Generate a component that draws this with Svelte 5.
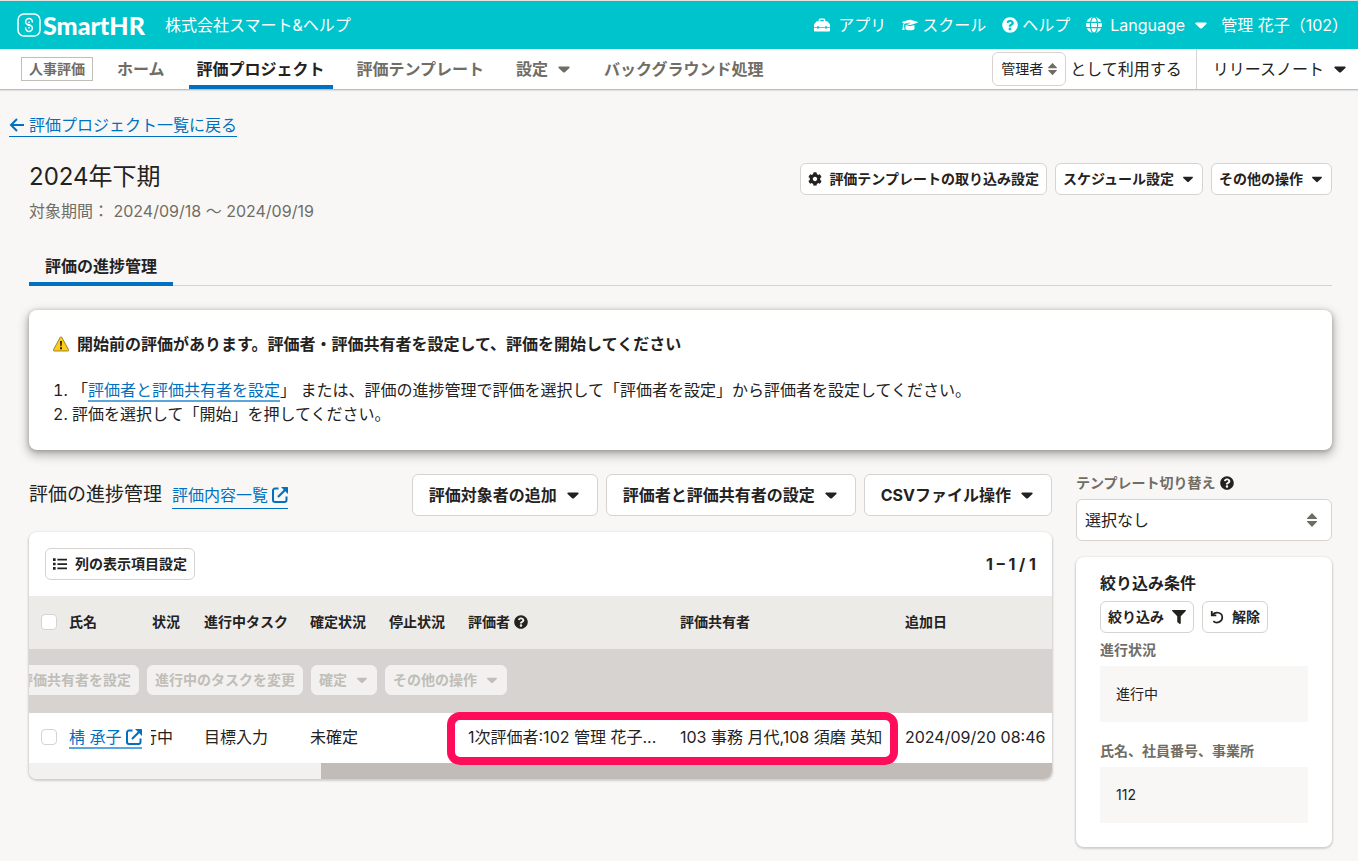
<script lang="ts">
	let role: string = $state('admin');
	let template: string = $state('');
	let allChecked: boolean = $state(false);

	const navLinks: string[] = ['ホーム', '評価プロジェクト', '評価テンプレート'];
	const currentNav = '評価プロジェクト';

	const listActions: string[] = ['評価対象者の追加', '評価者と評価共有者の設定', 'CSVファイル操作'];

	const batchActions = [
		{ label: '評価共有者を設定', menu: false },
		{ label: '進行中のタスクを変更', menu: false },
		{ label: '確定', menu: true },
		{ label: 'その他の操作', menu: true }
	];

	let rows = $state([
		{
			name: '棈 承子',
			status: '進行中',
			task: '目標入力',
			fixed: '未確定',
			stopped: '',
			evaluator: '1次評価者:102 管理 花子...',
			shared: '103 事務 月代,108 須磨 英知',
			added: '2024/09/20 08:46',
			checked: false
		}
	]);

	const conditions = [
		{ label: '進行状況', value: '進行中' },
		{ label: '氏名、社員番号、事業所', value: '112' }
	];

	function toggleAll() {
		rows.forEach((row) => (row.checked = allChecked));
	}
</script>

{#snippet caret()}
	<svg class="caret" viewBox="0 0 16 16" aria-hidden="true">
		<path d="M3.2 5.5h9.6c.8 0 1.1.8.6 1.4l-4.5 4.3c-.5.5-1.3.5-1.8 0L2.6 6.9c-.5-.6-.2-1.4.6-1.4z" />
	</svg>
{/snippet}

{#snippet sorter()}
	<svg class="sorter" viewBox="0 0 12 16" aria-hidden="true">
		<path d="M6 1l5 5.2v.8H1v-.8zM6 15l5-5.2V9H1v.8z" />
	</svg>
{/snippet}

{#snippet help()}
	<svg class="help" viewBox="0 0 512 512" aria-hidden="true">
		<path
			d="M504 256c0 136.997-111.043 248-248 248S8 392.997 8 256C8 119.083 119.043 8 256 8s248 111.083 248 248zM262.655 90c-54.497 0-89.255 22.957-116.549 63.758-3.536 5.286-2.353 12.415 2.715 16.258l34.699 26.31c5.205 3.947 12.621 3.008 16.665-2.122 17.864-22.658 30.113-35.797 57.303-35.797 20.429 0 45.698 13.148 45.698 32.958 0 14.976-12.363 22.667-32.534 33.976C247.128 238.528 216 254.941 216 296v4c0 6.627 5.373 12 12 12h56c6.627 0 12-5.373 12-12v-1.333c0-28.462 83.186-29.647 83.186-106.667 0-58.002-60.165-102-116.531-102zM256 338c-25.365 0-46 20.635-46 46 0 25.364 20.635 46 46 46s46-20.636 46-46c0-25.365-20.635-46-46-46z"
		/>
	</svg>
{/snippet}

{#snippet external()}
	<svg class="external" viewBox="0 0 16 16" aria-hidden="true">
		<path
			d="M6.5 1.5H3a2 2 0 0 0-2 2V13a2 2 0 0 0 2 2h9.5a2 2 0 0 0 2-2V9.5"
			fill="none"
			stroke="currentColor"
			stroke-width="2"
		/>
		<path d="M6 10L13 3" stroke="currentColor" stroke-width="2.2" />
		<path d="M9 0h6.500q.5 0 .5.500V7z" />
	</svg>
{/snippet}

<header>
	<a class="logo" href="#home">
		<svg viewBox="0 0 24 24" aria-hidden="true">
			<rect x="1" y="1" width="22" height="22" rx="6" />
			<path
				d="M15.400 9.600V9a3.400 3.400 0 0 0-6.800 0c0 1.700 1.200 2.400 2.600 3l1.600.8M8.600 14.400v.6a3.400 3.400 0 0 0 6.800 0c0-1.700-1.200-2.400-2.600-3l-1.600-.8M12 8.600v1.400M12 15.400v-1.400"
			/>
		</svg>
		<span>SmartHR</span>
	</a>
	<span class="company">株式会社スマート&ヘルプ</span>
	<div class="account">
		<a class="apps" href="#apps">
			<svg viewBox="0 0 17 16" aria-hidden="true">
				<path
					fill-rule="evenodd"
					d="M5 4V2.500C5 1.700 5.700 1 6.500 1h4c.8 0 1.500.7 1.500 1.500V4h1.300c.4 0 .8.2 1 .4l2.200 2.300c.3.3.5.7.5 1.100V10h-3.500V9H12v1H5V9H3.500v1H0V7.800c0-.4.2-.8.5-1.100l2.200-2.300c.2-.2.6-.4 1-.4zm1.600 0h3.800V2.600H6.600zM0 11h3.500v1H5v-1h7v1h1.500v-1H17v2.800c0 .7-.5 1.200-1.200 1.200H1.200C.5 15 0 14.500 0 13.800z"
				/>
			</svg>
			アプリ
		</a>
		<a href="#school">
			<svg viewBox="0 0 18 16" aria-hidden="true">
				<path
					d="M9.600 2.100l7.800 2.300c.6.200.6.900 0 1.100L9.700 7.900c-.5.100-.9.100-1.400 0L4.700 6.800l4.400-.8-.2-.8-5.500 1c-.7.300-1.100.9-1.200 1.700.5.300.5 1 .1 1.400L3 13.500H.3l.8-4.200c-.4-.4-.4-1 .1-1.400 0-.9.3-1.500.8-2L.6 5.500C0 5.300 0 4.600.6 4.400l7.700-2.300c.4-.1.900-.1 1.300 0z"
				/>
				<path d="M4.200 8l3.900 1.200c.6.200 1.200.2 1.800 0L13.800 8l.4 3.800c0 2.800-10.400 2.800-10.400 0z" />
			</svg>
			スクール
		</a>
		<a href="#help">{@render help()}ヘルプ</a>
		<button class="language">
			<svg viewBox="0 0 16 16" aria-hidden="true">
				<circle cx="8" cy="8" r="8" />
				<g class="meridians">
					<ellipse cx="8" cy="8" rx="3.600" ry="8" />
					<path d="M0 5.300h16M0 10.700h16" />
				</g>
			</svg>
			Language
			{@render caret()}
		</button>
		<button class="user">管理 花子（102）</button>
	</div>
</header>

<nav>
	<span class="app-name">人事評価</span>
	{#each navLinks as link}
		<a class="nav-link" class:current={link === currentNav} href="#nav">{link}</a>
	{/each}
	<button class="nav-link">設定{@render caret()}</button>
	<a class="nav-link" href="#nav">バックグラウンド処理</a>
	<div class="nav-right">
		<span class="select small">
			<select id="role" bind:value={role}>
				<option value="admin">管理者</option>
			</select>
			{@render sorter()}
		</span>
		<label for="role">として利用する</label>
		<button class="release">リリースノート{@render caret()}</button>
	</div>
</nav>

<main>
	<a class="back" href="#projects">
		<svg viewBox="0 0 16 16" aria-hidden="true">
			<path d="M15 8H2M8 2L2 8l6 6" fill="none" stroke="currentColor" stroke-width="2" />
		</svg>
		評価プロジェクト一覧に戻る
	</a>

	<div class="content">
		<div class="page-head">
			<div>
				<h1>2024年下期</h1>
				<p class="period">対象期間： 2024/09/18 〜 2024/09/19</p>
			</div>
			<div class="actions">
				<button class="btn">
					<svg viewBox="0 0 512 512" aria-hidden="true">
						<path
							d="M487.4 315.7l-42.6-24.6c4.3-23.2 4.3-47 0-70.2l42.6-24.6c4.9-2.8 7.1-8.6 5.5-14-11.1-35.6-30-67.8-54.7-94.6-3.8-4.1-10-5.1-14.8-2.3L380.8 110c-17.9-15.4-38.5-27.3-60.8-35.1V25.8c0-5.6-3.9-10.5-9.4-11.7-36.7-8.2-74.3-7.8-109.2 0-5.5 1.2-9.4 6.1-9.4 11.7V75c-22.2 7.9-42.8 19.8-60.8 35.1L88.7 85.5c-4.9-2.8-11-1.9-14.8 2.3-24.7 26.7-43.6 58.9-54.7 94.6-1.7 5.4.6 11.2 5.5 14L67.3 221c-4.3 23.2-4.3 47 0 70.2l-42.6 24.6c-4.9 2.8-7.1 8.6-5.5 14 11.1 35.6 30 67.8 54.7 94.6 3.8 4.1 10 5.1 14.8 2.3l42.6-24.6c17.9 15.4 38.5 27.3 60.8 35.1v49.2c0 5.6 3.9 10.5 9.4 11.7 36.7 8.2 74.3 7.8 109.2 0 5.5-1.2 9.4-6.1 9.4-11.7v-49.2c22.2-7.9 42.8-19.8 60.8-35.1l42.6 24.6c4.9 2.8 11 1.9 14.8-2.3 24.7-26.7 43.6-58.9 54.7-94.6 1.5-5.5-.7-11.3-5.6-14.1zM256 336c-44.1 0-80-35.9-80-80s35.9-80 80-80 80 35.9 80 80-35.9 80-80 80z"
						/>
					</svg>
					評価テンプレートの取り込み設定
				</button>
				<button class="btn">スケジュール設定{@render caret()}</button>
				<button class="btn">その他の操作{@render caret()}</button>
			</div>
		</div>

		<div class="tabs" role="tablist">
			<button class="tab" role="tab" aria-selected="true">評価の進捗管理</button>
		</div>

		<section class="notice">
			<h2>
				<svg viewBox="0 0 16 16" aria-hidden="true">
					<path
						d="M7.200 1.300a.9.9 0 0 1 1.600 0l6.800 12.500c.3.6 0 1.200-.7 1.200H1.100c-.7 0-1-.6-.7-1.200z"
						fill="#ffcc17"
						stroke="#6b5a1e"
						stroke-width=".7"
					/>
					<path d="M7 5h2l-.4 5.200H7.400zM7 11.300h2v2H7z" fill="#23221e" />
				</svg>
				開始前の評価があります。評価者・評価共有者を設定して、評価を開始してください
			</h2>
			<ol>
				<li>「<a href="#evaluators">評価者と評価共有者を設定</a>」 または、評価の進捗管理で評価を選択して「評価者を設定」から評価者を設定してください。</li>
				<li>評価を選択して「開始」を押してください。</li>
			</ol>
		</section>

		<div class="columns">
			<section class="progress">
				<div class="section-head">
					<h2>評価の進捗管理</h2>
					<a class="contents-link" href="#contents">評価内容一覧{@render external()}</a>
					<div class="actions">
						{#each listActions as action}
							<button class="btn large">{action}{@render caret()}</button>
						{/each}
					</div>
				</div>

				<div class="card table-card">
					<div class="toolbar">
						<button class="btn">
							<svg viewBox="0 0 16 16" aria-hidden="true">
								<path d="M0 1.500h3v3H0zM0 6.500h3v3H0zM0 11.500h3v3H0zM5 2h11v2H5zM5 7h11v2H5zM5 12h11v2H5z" />
							</svg>
							列の表示項目設定
						</button>
						<span class="count">1 – 1 / 1</span>
					</div>
					<table>
						<colgroup>
							<col class="col-check" />
							<col class="col-name" />
							<col class="col-status" />
							<col class="col-task" />
							<col class="col-state" />
							<col class="col-state" />
							<col class="col-evaluator" />
							<col class="col-shared" />
							<col />
						</colgroup>
						<thead>
							<tr>
								<th class="check">
									<input
										type="checkbox"
										aria-label="すべて選択"
										bind:checked={allChecked}
										onchange={toggleAll}
									/>
								</th>
								<th class="name">氏名</th>
								<th class="status"><div>状況</div></th>
								<th>進行中タスク</th>
								<th>確定状況</th>
								<th>停止状況</th>
								<th><div class="with-help">評価者{@render help()}</div></th>
								<th>評価共有者</th>
								<th>追加日</th>
							</tr>
						</thead>
						<tbody>
							<tr class="batch">
								<td colspan="9">
									<div class="batch-actions">
										{#each batchActions as action}
											<button class="btn" disabled>
												{action.label}
												{#if action.menu}{@render caret()}{/if}
											</button>
										{/each}
									</div>
								</td>
							</tr>
							{#each rows as row}
								<tr>
									<td class="check">
										<input type="checkbox" aria-label={row.name} bind:checked={row.checked} />
									</td>
									<td class="name"><a href="#employee">{row.name}{@render external()}</a></td>
									<td class="status"><div>{row.status}</div></td>
									<td>{row.task}</td>
									<td>{row.fixed}</td>
									<td>{row.stopped}</td>
									<td class="evaluator">{row.evaluator}<span class="highlight"></span></td>
									<td>{row.shared}</td>
									<td>{row.added}</td>
								</tr>
							{/each}
						</tbody>
					</table>
					<div class="scrollbar"><div class="thumb"></div></div>
				</div>
			</section>

			<aside>
				<label class="template-label" for="template">テンプレート切り替え{@render help()}</label>
				<span class="select">
					<select id="template" bind:value={template}>
						<option value="">選択なし</option>
					</select>
					{@render sorter()}
				</span>

				<section class="card filter">
					<h3>絞り込み条件</h3>
					<div class="actions">
						<button class="btn">
							絞り込み
							<svg viewBox="0 0 512 512" aria-hidden="true">
								<path
									d="M487.976 0H24.028C2.710 0-8.047 25.866 7.058 40.971L192 225.941V432c0 7.831 3.821 15.170 10.237 19.662l80 55.980C298.020 518.690 320 507.493 320 487.980V225.941l184.947-184.970C520.021 25.896 509.338 0 487.976 0z"
								/>
							</svg>
						</button>
						<button class="btn">
							<svg viewBox="0 0 16 16" aria-hidden="true">
								<path
									d="M3 5.200C6 1.600 14 2.200 14 8.400c0 5.800-7 7.400-10.200 4.200M2 1v5.200h5.200"
									fill="none"
									stroke="currentColor"
									stroke-width="2"
								/>
							</svg>
							解除
						</button>
					</div>
					<dl>
						{#each conditions as condition}
							<dt>{condition.label}</dt>
							<dd>{condition.value}</dd>
						{/each}
					</dl>
				</section>
			</aside>
		</div>
	</div>
</main>

<style>
	:global(body) {
		background-color: #f8f7f6;
		color: #23221e;
		font-family: Inter, 'Noto Sans CJK JP', sans-serif;
		font-size: 16px;
		font-variation-settings: 'opsz' 32;
		line-height: 20px;
	}

	h1,
	h2,
	h3,
	p,
	ol,
	dl,
	dd {
		margin: 0;
		padding: 0;
	}

	a {
		color: #0071c1;
		text-decoration: none;
	}

	button,
	select {
		font: inherit;
		font-variation-settings: inherit;
		color: inherit;
		background: none;
		border: none;
		padding: 0;
		white-space: nowrap;
		cursor: pointer;
	}

	svg {
		flex: none;
		fill: currentColor;
	}

	.caret {
		width: 16px;
		height: 16px;
	}

	.help {
		width: 14px;
		height: 14px;
	}

	.external {
		width: 16px;
		height: 16px;
	}

	header {
		display: flex;
		align-items: center;
		box-sizing: border-box;
		height: 49px;
		padding: 0 10px 0 17px;
		border-top: 1px solid #e4e2e0;
		background-color: #00c4cc;
		color: #fff;
	}

	.logo {
		display: flex;
		align-items: center;
		gap: 2px;
		color: #fff;
		font-family: Lato, Inter, sans-serif;
		font-size: 25px;
		font-weight: 900;
	}

	.logo svg {
		width: 24px;
		height: 24px;
		fill: none;
		stroke: #fff;
		stroke-width: 1.5;
	}

	.company {
		margin-left: 20px;
	}

	.account {
		display: flex;
		align-items: center;
		gap: 16px;
		margin-left: auto;
	}

	.account a,
	.account button {
		display: flex;
		align-items: center;
		gap: 4px;
		color: #fff;
	}

	.account svg {
		width: 16px;
		height: 16px;
	}

	.account .apps,
	.account .language {
		gap: 8px;
	}

	.account .user {
		margin-left: -4px;
	}

	.meridians {
		fill: none;
		stroke: #00c4cc;
		stroke-width: 1.2;
	}

	nav {
		display: flex;
		align-items: center;
		box-sizing: border-box;
		height: 41px;
		padding-left: 21px;
		border-bottom: 1px solid #c1bdb7;
		background-color: #fff;
		box-shadow: 0 1px 1px #e4e2e0;
	}

	.app-name {
		margin-right: 16px;
		padding: 1px 7px;
		border: 1px solid #c1bdb7;
		color: #706d65;
		font-size: 14px;
		font-weight: bold;
	}

	.nav-link {
		display: flex;
		align-items: center;
		gap: 8px;
		box-sizing: border-box;
		height: 40px;
		margin-right: 16px;
		padding: 4px 8px 0;
		border-bottom: 4px solid transparent;
		color: #706d65;
		font-weight: bold;
		white-space: nowrap;
	}

	.nav-link.current {
		border-color: #0071c1;
		color: #23221e;
	}

	.nav-right {
		display: flex;
		align-items: center;
		align-self: stretch;
		gap: 4px;
		margin-left: auto;
	}

	.release {
		display: flex;
		align-items: center;
		align-self: stretch;
		gap: 8px;
		margin-left: 10px;
		padding: 0 10px 0 16px;
		border-left: 1px solid #d6d3d0;
	}

	.select {
		display: flex;
		position: relative;
	}

	.select select {
		appearance: none;
		box-sizing: border-box;
		width: 100%;
		height: 42px;
		padding: 0 32px 0 8px;
		border: 1px solid #d6d3d0;
		border-radius: 6px;
		background-color: #fff;
	}

	.sorter {
		position: absolute;
		top: 13px;
		right: 14px;
		width: 12px;
		height: 16px;
		color: #706d65;
		pointer-events: none;
	}

	.select.small select {
		height: 34px;
		padding: 0 22px 0 8px;
		font-size: 14px;
	}

	.select.small .sorter {
		top: 10px;
		right: 8px;
		width: 11px;
		height: 14px;
	}

	main {
		padding: 24px 26px 14px 9px;
	}

	.back {
		display: inline-flex;
		align-items: center;
		gap: 4px;
		border-bottom: 1px solid #0071c1;
		line-height: 22px;
	}

	.back svg {
		width: 16px;
		height: 16px;
	}

	.content {
		display: flex;
		flex-direction: column;
		gap: 24px;
		margin: 24px 0 0 20px;
	}

	.page-head {
		display: flex;
		align-items: flex-start;
		justify-content: space-between;
	}

	h1 {
		font-size: 24px;
		font-weight: normal;
		line-height: 32px;
	}

	.period {
		margin-top: 8px;
		color: #706d65;
	}

	.actions {
		display: flex;
		gap: 8px;
	}

	.page-head .actions {
		padding-top: 2px;
	}

	.btn {
		display: inline-flex;
		align-items: center;
		gap: 8px;
		box-sizing: border-box;
		height: 32px;
		padding: 0 7px;
		border: 1px solid #d6d3d0;
		border-radius: 6px;
		background-color: #fff;
		font-size: 14px;
		font-weight: bold;
	}

	.page-head .btn {
		gap: 7px;
	}

	.btn svg {
		width: 14px;
		height: 14px;
	}

	.btn.large {
		height: 42px;
		padding: 0 16px;
		font-size: 16px;
	}

	.btn.large svg {
		width: 16px;
		height: 16px;
	}

	.btn:disabled {
		height: 30px;
		border-color: #f2f1f0;
		background-color: #f2f1f0;
		color: #c1bdb7;
		cursor: default;
	}

	.tabs {
		display: flex;
		box-shadow: inset 0 -1px #d6d3d0;
	}

	.tab {
		height: 41px;
		padding: 4px 16px 0;
		border-bottom: 4px solid #0071c1;
		font-weight: bold;
	}

	.notice {
		padding: 24px;
		border-radius: 8px;
		background-color: #fff;
		box-shadow: 0 4px 10px 2px rgba(51, 51, 51, 0.3), 0 1px 4px rgba(51, 51, 51, 0.3);
	}

	.notice h2 {
		display: flex;
		align-items: center;
		gap: 8px;
		font-size: 16px;
	}

	.notice h2 svg {
		width: 16px;
		height: 16px;
	}

	.notice ol {
		margin-top: 24px;
		list-style-position: inside;
		line-height: 24px;
	}

	.notice ol a,
	.name a {
		box-shadow: 0 2px #5ba6dc;
	}

	.columns {
		display: grid;
		grid-template-columns: minmax(0, 1fr) 256px;
		align-items: start;
		gap: 24px;
	}

	.section-head {
		display: flex;
		align-items: center;
		gap: 10px;
		margin-bottom: 16px;
	}

	.section-head h2 {
		font-size: 19px;
		font-weight: normal;
	}

	.section-head .actions {
		margin-left: auto;
	}

	.contents-link {
		display: flex;
		align-items: center;
		gap: 4px;
		padding: 3px 0;
		border-bottom: 1px solid #0071c1;
	}

	.card {
		border-radius: 8px;
		background-color: #fff;
		box-shadow: 0 1px 2px 1px rgba(51, 51, 51, 0.2);
	}

	.table-card {
		overflow: hidden;
	}

	.toolbar {
		display: flex;
		align-items: center;
		justify-content: space-between;
		padding: 16px;
	}

	.count {
		font-weight: bold;
	}

	table {
		width: 100%;
		border-collapse: collapse;
		table-layout: fixed;
	}

	.col-check {
		width: 40px;
	}

	.col-name {
		width: 82px;
	}

	.col-status {
		width: 37px;
	}

	.col-task {
		width: 106px;
	}

	.col-state {
		width: 79px;
	}

	.col-evaluator {
		width: 212px;
	}

	.col-shared {
		width: 225px;
	}

	th {
		height: 52px;
		padding: 0 0 1px 16px;
		background-color: #edebe8;
		font-size: 14px;
		text-align: left;
		white-space: nowrap;
	}

	td {
		height: 48px;
		padding: 0 0 2px 16px;
		white-space: nowrap;
	}

	.check {
		padding-left: 12px;
	}

	.name {
		padding-left: 0;
	}

	.name a {
		display: inline-flex;
		align-items: center;
		gap: 4px;
	}

	.status {
		padding-left: 0;
		padding-right: 15px;
	}

	.status div {
		display: flex;
		justify-content: flex-end;
		overflow: hidden;
	}

	th.status {
		padding-right: 8px;
	}

	input[type='checkbox'] {
		display: block;
		appearance: none;
		width: 16px;
		height: 16px;
		margin: 0;
		border: 1px solid #d6d3d0;
		border-radius: 4px;
		background-color: #fff;
	}

	input[type='checkbox']:checked {
		border-color: #0071c1;
		background-color: #0071c1;
	}

	.with-help {
		display: flex;
		align-items: center;
		gap: 4px;
	}

	.batch td {
		height: 62px;
		padding-left: 0;
		background-color: #d6d3d0;
	}

	.batch-actions {
		display: flex;
		gap: 8px;
		margin-left: -18px;
	}

	.evaluator {
		position: relative;
	}

	.highlight {
		position: absolute;
		top: -1px;
		left: -5px;
		box-sizing: border-box;
		width: 451px;
		height: 53px;
		border: 8px solid #ff0d5b;
		border-radius: 13px;
		pointer-events: none;
	}

	.scrollbar {
		display: flex;
		justify-content: flex-end;
		height: 16px;
		background-color: #f2f1f0;
	}

	.thumb {
		width: 71.5%;
		background-color: #c1bcb7;
	}

	.template-label {
		display: flex;
		align-items: center;
		gap: 4px;
		margin-bottom: 8px;
		color: #706d65;
		font-size: 14px;
		font-weight: bold;
		line-height: 17px;
	}

	.template-label .help {
		color: #23221e;
	}

	.filter {
		margin-top: 16px;
		padding: 16px 24px 24px;
	}

	.filter h3 {
		margin-bottom: 8px;
		font-size: 16px;
	}

	dt {
		margin-top: 8px;
		color: #706d65;
		font-size: 14px;
		font-weight: bold;
		line-height: 17px;
	}

	dd {
		margin-top: 8px;
		padding: 18px 16px;
		background-color: #f8f7f6;
		font-size: 14px;
	}

	dd + dt {
		margin-top: 20px;
	}
</style>
